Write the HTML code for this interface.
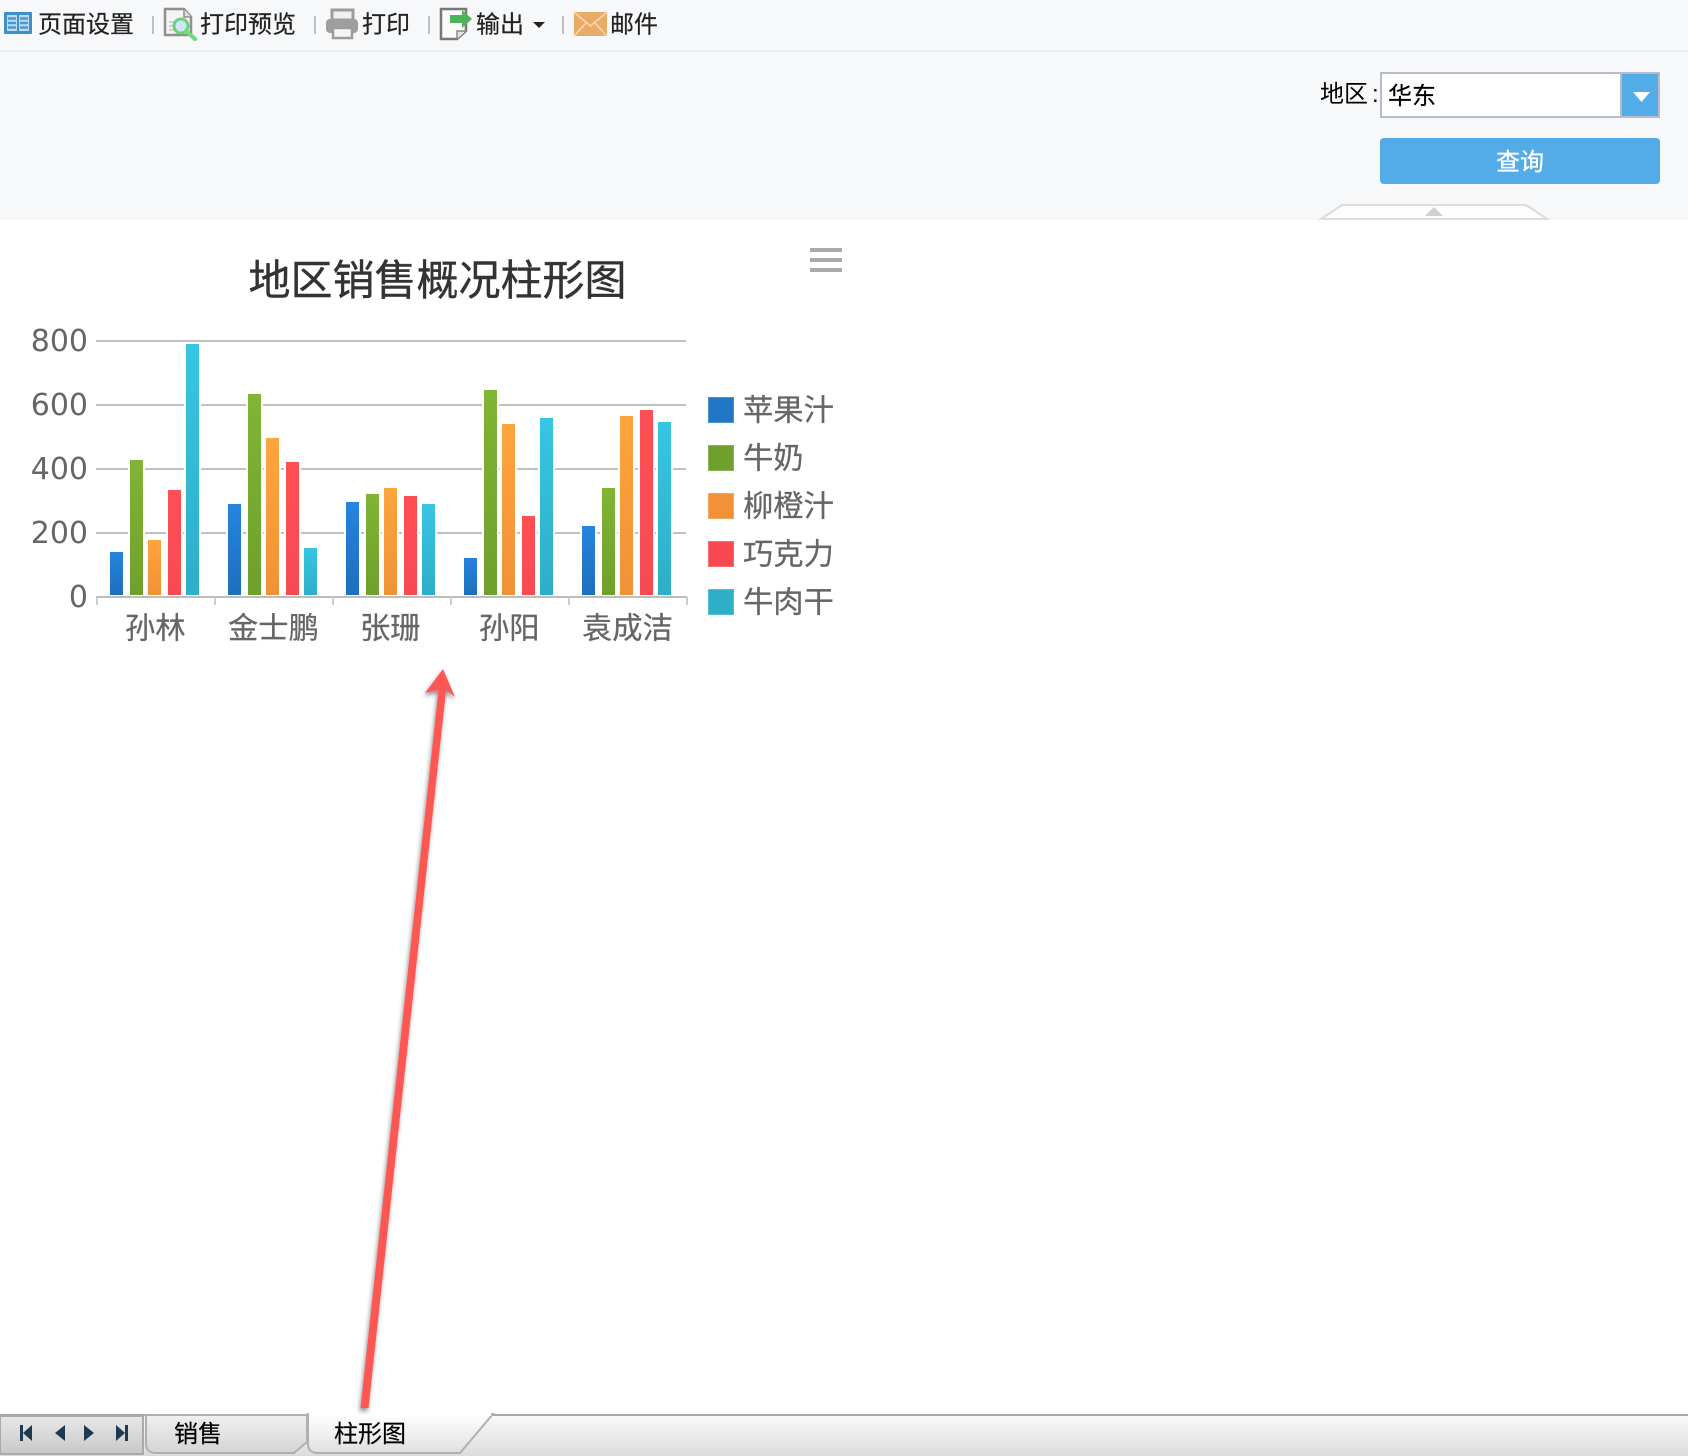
<!DOCTYPE html>
<html lang="zh-CN">
<head>
<meta charset="utf-8">
<title>地区销售概况柱形图</title>
<style>
html,body{margin:0;padding:0;background:#fff;width:1688px;height:1456px;overflow:hidden}
svg{display:block;position:absolute;left:0;top:0}
text{font-family:"Liberation Sans","Noto Sans CJK SC",sans-serif}
.t{font-size:24px;fill:#222;stroke:#222;stroke-width:.2}
.c{font-size:30.300px;fill:#666;stroke:#666;stroke-width:.25}
.d{font-size:30px;fill:#666;font-family:"DejaVu Sans",sans-serif;text-anchor:end}
.b{stroke:#fff;stroke-width:2}
.sep{fill:#bfc1c4}
</style>
</head>
<body>
<svg width="1688" height="1456" viewBox="0 0 1688 1456" xmlns="http://www.w3.org/2000/svg">
<defs>
<linearGradient id="g1" x1="0" y1="0" x2="0" y2="1"><stop offset="0" stop-color="#2684e0"/><stop offset="1" stop-color="#1f6fba"/></linearGradient>
<linearGradient id="g2" x1="0" y1="0" x2="0" y2="1"><stop offset="0" stop-color="#80b535"/><stop offset="1" stop-color="#6ea02c"/></linearGradient>
<linearGradient id="g3" x1="0" y1="0" x2="0" y2="1"><stop offset="0" stop-color="#ffa53c"/><stop offset="1" stop-color="#f09138"/></linearGradient>
<linearGradient id="g4" x1="0" y1="0" x2="0" y2="1"><stop offset="0" stop-color="#ff4f55"/><stop offset="1" stop-color="#f74a52"/></linearGradient>
<linearGradient id="g5" x1="0" y1="0" x2="0" y2="1"><stop offset="0" stop-color="#36c6e3"/><stop offset="1" stop-color="#2eaec8"/></linearGradient>
<linearGradient id="bar" x1="0" y1="0" x2="0" y2="1"><stop offset="0" stop-color="#fbfbfb"/><stop offset="1" stop-color="#dcdcdc"/></linearGradient>
<linearGradient id="nav" x1="0" y1="0" x2="0" y2="1"><stop offset="0" stop-color="#e8e8e8"/><stop offset="1" stop-color="#c8c8c8"/></linearGradient>
<linearGradient id="tab" x1="0" y1="0" x2="0" y2="1"><stop offset="0" stop-color="#f0f0f0"/><stop offset="1" stop-color="#d4d4d4"/></linearGradient>
<linearGradient id="tab2" x1="0" y1="0" x2="0" y2="1"><stop offset="0" stop-color="#ffffff"/><stop offset="1" stop-color="#e0e0e0"/></linearGradient>
<filter id="sh" x="-30%" y="-5%" width="160%" height="110%"><feDropShadow dx="-1" dy="3" stdDeviation="2.500" flood-color="#000" flood-opacity=".45"/></filter>
</defs>

<!-- header panel -->
<rect x="0" y="0" width="1688" height="220" fill="#f7f8fa"/>
<rect x="0" y="50" width="1688" height="2" fill="#eceef0"/>

<!-- toolbar: page setup -->
<rect x="4" y="12" width="28" height="22" rx="1" fill="#3f8fcb"/>
<rect x="7" y="15" width="10" height="16" fill="#bcdcf2"/>
<rect x="19" y="15" width="10" height="16" fill="#bcdcf2"/>
<path d="M8 18.500h8M8 23h8M8 27.500h8M20 18.500h8M20 23h8M20 27.500h8" stroke="#4b97d2" stroke-width="2.500"/>
<text class="t" x="38" y="32.500">页面设置</text>
<rect class="sep" x="152" y="16" width="2" height="18"/>

<!-- toolbar: print preview -->
<path d="M165 9H184L191 17V35H165Z" fill="#f4f4f4" stroke="#8f8f8f" stroke-width="2.500"/>
<path d="M184 9V17H191" fill="#e0e0e0" stroke="#8f8f8f" stroke-width="1.500"/>
<path d="M169 22h8M169 26h7M169 30h8" stroke="#c4c4c4" stroke-width="1.500"/>
<circle cx="181" cy="26" r="7" fill="#cfe6f6" stroke="#6ed07a" stroke-width="3"/>
<path d="M186 31L195 39" stroke="#6fdc78" stroke-width="4" stroke-linecap="round"/>
<text class="t" x="200" y="32.500">打印预览</text>
<rect class="sep" x="314" y="16" width="2" height="18"/>

<!-- toolbar: print -->
<rect x="332" y="10" width="21" height="10" fill="#f0f0f0" stroke="#9c9c9c" stroke-width="3"/>
<rect x="326" y="19" width="32" height="14" rx="4" fill="#9c9ea0"/>
<rect x="333" y="28" width="19" height="10" fill="#f4f4f4" stroke="#9c9c9c" stroke-width="2.500"/>
<text class="t" x="362" y="32.500">打印</text>
<rect class="sep" x="428" y="16" width="2" height="18"/>

<!-- toolbar: export -->
<path d="M441 9H466V31L457 39H441Z" fill="#fbfbfb" stroke="#777" stroke-width="2.500"/>
<path d="M457 39V31H466" fill="#e4e4e4" stroke="#888" stroke-width="1.500"/>
<path d="M450 15H462V10L472 19L462 28V23H450Z" fill="#4bb35c"/>
<text class="t" x="476" y="32.500">输出</text>
<path d="M533 22H545L539 28Z" fill="#222"/>
<rect class="sep" x="562" y="16" width="2" height="18"/>

<!-- toolbar: mail -->
<rect x="574" y="12" width="33" height="24" rx="2" fill="#e9ac66"/>
<path d="M575 13L590.500 26L606 13M575 35L586 23M606 35L595 23" fill="none" stroke="#f6d9b4" stroke-width="1.500"/>
<text class="t" x="610" y="32.500">邮件</text>

<!-- filter -->
<text x="1320" y="102" font-size="24" fill="#000">地区</text>
<text x="1372" y="102" font-size="24" fill="#000">:</text>
<rect x="1381" y="73" width="278" height="44" fill="#fff" stroke="#b8bbc8" stroke-width="2"/>
<rect x="1620" y="74" width="2" height="42" fill="#b8bbc8"/>
<rect x="1622" y="74" width="36" height="42" fill="#53abe8"/>
<path d="M1633 92H1650L1641.500 102Z" fill="#fff"/>
<text x="1388" y="104" font-size="24" fill="#000" stroke="#000" stroke-width=".2">华东</text>
<rect x="1380" y="138" width="280" height="46" rx="4" fill="#53abe8"/>
<text x="1496" y="170" font-size="24" fill="#fff" stroke="#fff" stroke-width=".35">查询</text>
<path d="M1321 219L1342 205H1526L1547 219Z" fill="#fdfdfd" stroke="#dcdcdc" stroke-width="2"/>
<path d="M1425 216L1434 207L1443 216Z" fill="#d0d0d0"/>

<!-- chart title -->
<text x="248.500" y="295" font-size="42" fill="#333" stroke="#333" stroke-width=".4">地区销售概况柱形图</text>

<!-- hamburger -->
<rect x="810" y="248" width="32" height="4" fill="#aaa"/>
<rect x="810" y="258" width="32" height="4" fill="#aaa"/>
<rect x="810" y="268" width="32" height="4" fill="#aaa"/>

<!-- grid -->
<rect x="96" y="340" width="590" height="2" fill="#c0c0c0"/>
<rect x="96" y="404" width="590" height="2" fill="#c0c0c0"/>
<rect x="96" y="468" width="590" height="2" fill="#c0c0c0"/>
<rect x="96" y="532" width="590" height="2" fill="#c0c0c0"/>

<!-- y labels -->
<text class="d" x="88" y="351">800</text>
<text class="d" x="88" y="415">600</text>
<text class="d" x="88" y="479">400</text>
<text class="d" x="88" y="543">200</text>
<text class="d" x="88" y="607">0</text>

<!-- bars -->
<g class="bars">
<rect class="b" fill="url(#g1)" x="109" y="551" width="15" height="45"/>
<rect class="b" fill="url(#g2)" x="129" y="459" width="15" height="137"/>
<rect class="b" fill="url(#g3)" x="147" y="539" width="15" height="57"/>
<rect class="b" fill="url(#g4)" x="167" y="489" width="15" height="107"/>
<rect class="b" fill="url(#g5)" x="185" y="343" width="15" height="253"/>

<rect class="b" fill="url(#g1)" x="227" y="503" width="15" height="93"/>
<rect class="b" fill="url(#g2)" x="247" y="393" width="15" height="203"/>
<rect class="b" fill="url(#g3)" x="265" y="437" width="15" height="159"/>
<rect class="b" fill="url(#g4)" x="285" y="461" width="15" height="135"/>
<rect class="b" fill="url(#g5)" x="303" y="547" width="15" height="49"/>

<rect class="b" fill="url(#g1)" x="345" y="501" width="15" height="95"/>
<rect class="b" fill="url(#g2)" x="365" y="493" width="15" height="103"/>
<rect class="b" fill="url(#g3)" x="383" y="487" width="15" height="109"/>
<rect class="b" fill="url(#g4)" x="403" y="495" width="15" height="101"/>
<rect class="b" fill="url(#g5)" x="421" y="503" width="15" height="93"/>

<rect class="b" fill="url(#g1)" x="463" y="557" width="15" height="39"/>
<rect class="b" fill="url(#g2)" x="483" y="389" width="15" height="207"/>
<rect class="b" fill="url(#g3)" x="501" y="423" width="15" height="173"/>
<rect class="b" fill="url(#g4)" x="521" y="515" width="15" height="81"/>
<rect class="b" fill="url(#g5)" x="539" y="417" width="15" height="179"/>

<rect class="b" fill="url(#g1)" x="581" y="525" width="15" height="71"/>
<rect class="b" fill="url(#g2)" x="601" y="487" width="15" height="109"/>
<rect class="b" fill="url(#g3)" x="619" y="415" width="15" height="181"/>
<rect class="b" fill="url(#g4)" x="639" y="409" width="15" height="187"/>
<rect class="b" fill="url(#g5)" x="657" y="421" width="15" height="175"/>
</g>

<!-- x axis -->
<rect x="96" y="596" width="591" height="2" fill="#bdbdbd"/>
<path d="M97 597V605M215 597V605M333 597V605M451 597V605M569 597V605M687 597V605" stroke="#ccc" stroke-width="2"/>

<!-- x labels -->
<text class="c" x="125" y="638.500">孙林</text>
<text class="c" x="228" y="638.500">金士鹏</text>
<text class="c" x="360" y="638.500">张珊</text>
<text class="c" x="479" y="638.500">孙阳</text>
<text class="c" x="582" y="638.500">袁成洁</text>

<!-- legend -->
<rect x="708.500" y="397.500" width="25" height="25" fill="#2176c6" stroke="#4a90d0"/>
<rect x="708.500" y="445.500" width="25" height="25" fill="#6ea02c" stroke="#8ab556"/>
<rect x="708.500" y="493.500" width="25" height="25" fill="#f29138" stroke="#f5a75f"/>
<rect x="708.500" y="541.500" width="25" height="25" fill="#f84850" stroke="#fa6a71"/>
<rect x="708.500" y="589.500" width="25" height="25" fill="#2eaec8" stroke="#55bfd4"/>
<text class="c" x="743" y="420.500">苹果汁</text>
<text class="c" x="743" y="468.500">牛奶</text>
<text class="c" x="743" y="516.500">柳橙汁</text>
<text class="c" x="743" y="564.500">巧克力</text>
<text class="c" x="743" y="612.500">牛肉干</text>

<!-- bottom bar -->
<rect x="0" y="1414" width="1688" height="42" fill="url(#bar)"/>
<rect x="0" y="1414" width="1688" height="2" fill="#a8a8a8"/>
<rect x="0" y="1416" width="143" height="38" fill="url(#nav)" stroke="#aaa" stroke-width="2"/>
<path d="M146 1415H307V1442L294 1453H156Q146 1453 146 1444Z" fill="url(#tab)" stroke="#b0b0b0" stroke-width="2"/>
<path d="M308 1414V1444Q308 1453 318 1453H460L493 1414Z" fill="url(#tab2)" stroke="#b0b0b0" stroke-width="2"/>
<rect x="309" y="1412" width="182" height="4" fill="#fff"/>
<g fill="#1c3b52">
<rect x="20" y="1425" width="3" height="16"/><path d="M32 1425V1441L23 1433Z"/>
<path d="M65 1425V1441L55 1433Z"/>
<path d="M84 1425V1441L94 1433Z"/>
<path d="M116 1425V1441L125 1433Z"/><rect x="125" y="1425" width="3" height="16"/>
</g>
<text x="174" y="1442" font-size="24" fill="#000" stroke="#000" stroke-width=".2">销售</text>
<text x="334" y="1442" font-size="24" fill="#000" stroke="#000" stroke-width=".2">柱形图</text>

<!-- arrow -->
<path d="M443 669L455 697L446 690L368.500 1408L360.500 1408L438.500 690L425 693Z" fill="#fd5653" filter="url(#sh)"/>
</svg>
</body>
</html>
